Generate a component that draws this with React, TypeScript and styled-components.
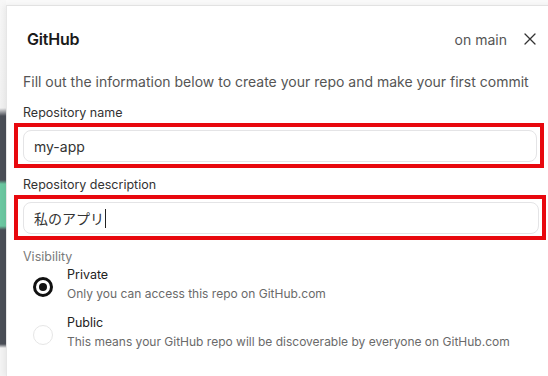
import React from 'react'
import styled, { createGlobalStyle } from 'styled-components'

const GlobalStyle = createGlobalStyle`
  html, body {
    margin: 0;
    padding: 0;
    background: #ffffff;
    font-family: Inter, "Noto Sans", "Noto Sans CJK JP", sans-serif;
    -webkit-font-smoothing: antialiased;
  }
`

const Page = styled.div`
  display: flex;
  width: 548px;
  height: 376px;
  overflow: hidden;
  background: #fafafa;
`

// the app window behind the dialog, only a sliver of it shows
const BehindStrip = styled.div`
  width: 6px;
  flex-shrink: 0;
  background: linear-gradient(
    to bottom,
    #f7f7f7 0px,
    #f2f2f2 108px,
    #4b4f58 116px,
    #4b4f58 180px,
    #6cc9a2 184px,
    #6cc9a2 226px,
    #4b4f58 230px,
    #4b4f58 344px,
    #f4f4f4 348px
  );
`

const Modal = styled.div`
  flex: 1;
  margin-top: 5px;
  background: #ffffff;
  border-top: 1px solid #e2e2e2;
  border-left: 1px solid #e6e6e6;
  box-shadow: -2px 0 6px rgba(0, 0, 0, 0.06);
  padding: 0 10px 0 16px;
`

const Header = styled.div`
  display: flex;
  align-items: center;
  height: 20px;
  margin-top: 23px;
  padding: 0 10px 0 4px;
`

const Title = styled.div`
  flex: 1;
  font-size: 16px;
  font-weight: 600;
  color: #1a1a1a;
  letter-spacing: -0.2px;
`

const Branch = styled.div`
  font-size: 14px;
  color: #555555;
  margin-right: 17px;
`

const CloseButton = styled.button`
  border: 0;
  background: none;
  padding: 0;
  width: 12px;
  height: 12px;
  display: flex;
  color: #333333;
`

const Intro = styled.p`
  margin: 23px 0 0;
  font-size: 14px;
  line-height: 20px;
  color: #555555;
  white-space: nowrap;
`

const Label = styled.div<{ gap: number; muted?: boolean }>`
  font-size: 12.5px;
  line-height: 16px;
  color: ${({ muted }) => (muted ? '#7a7a7a' : '#333333')};
  margin-top: ${({ gap }) => gap}px;
`

const Highlight = styled.div<{ right: number }>`
  margin: 2px 0 0 -9px;
  width: ${({ right }) => right - 14}px;
  box-sizing: border-box;
  border: 4px solid #e8080e;
  padding: 3px 3px 2px 5px;
`

const Input = styled.div`
  display: flex;
  align-items: center;
  height: 32px;
  box-sizing: border-box;
  border: 1px solid #e4e4e6;
  border-radius: 8px;
  padding: 0 10px;
  font-size: 14px;
  color: #333333;
  background: #ffffff;
`

const Caret = styled.span`
  display: inline-block;
  width: 1px;
  height: 19px;
  background: #222222;
  margin-left: 1px;
`

const Options = styled.div`
  display: flex;
  flex-direction: column;
  gap: 13px;
  margin-top: 2px;
  padding-left: 10px;
`

const Option = styled.div`
  display: flex;
  align-items: center;
  gap: 14px;
`

const Radio = styled.div<{ checked?: boolean }>`
  width: 20px;
  height: 20px;
  margin-top: 4px;
  box-sizing: border-box;
  border-radius: 50%;
  border: ${({ checked }) => (checked ? '3px solid #111111' : '1.5px solid #e6e6e6')};
  display: flex;
  align-items: center;
  justify-content: center;
  &::after {
    content: '';
    display: ${({ checked }) => (checked ? 'block' : 'none')};
    width: 8px;
    height: 8px;
    border-radius: 50%;
    background: #111111;
  }
`

const OptionText = styled.div`
  display: flex;
  flex-direction: column;
  gap: 3px;
`

const OptionTitle = styled.div`
  font-size: 12.5px;
  line-height: 16px;
  color: #222222;
`

const OptionHint = styled.div`
  font-size: 12px;
  line-height: 16px;
  color: #6a6a6a;
`

const options = [
  { title: 'Private', hint: 'Only you can access this repo on GitHub.com', checked: true },
  { title: 'Public', hint: 'This means your GitHub repo will be discoverable by everyone on GitHub.com', checked: false },
]

const App = () => (
  <>
    <GlobalStyle />
    <Page>
      <BehindStrip />
      <Modal>
        <Header>
          <Title>GitHub</Title>
          <Branch>on main</Branch>
          <CloseButton aria-label="Close">
            <svg width="12" height="12" viewBox="0 0 12 12">
              <path d="M1 1L11 11M11 1L1 11" stroke="currentColor" strokeWidth="1.3" strokeLinecap="round" />
            </svg>
          </CloseButton>
        </Header>
        <Intro>Fill out the information below to create your repo and make your first commit</Intro>

        <Label gap={13}>Repository name</Label>
        <Highlight right={544}>
          <Input>my-app</Input>
        </Highlight>

        <Label gap={9}>Repository description</Label>
        <Highlight right={546}>
          <Input>
            私のアプリ
            <Caret />
          </Input>
        </Highlight>

        <Label gap={9} muted>Visibility</Label>
        <Options>
          {options.map((o) => (
            <Option key={o.title}>
              <Radio checked={o.checked} />
              <OptionText>
                <OptionTitle>{o.title}</OptionTitle>
                <OptionHint>{o.hint}</OptionHint>
              </OptionText>
            </Option>
          ))}
        </Options>
      </Modal>
    </Page>
  </>
)

export default App
